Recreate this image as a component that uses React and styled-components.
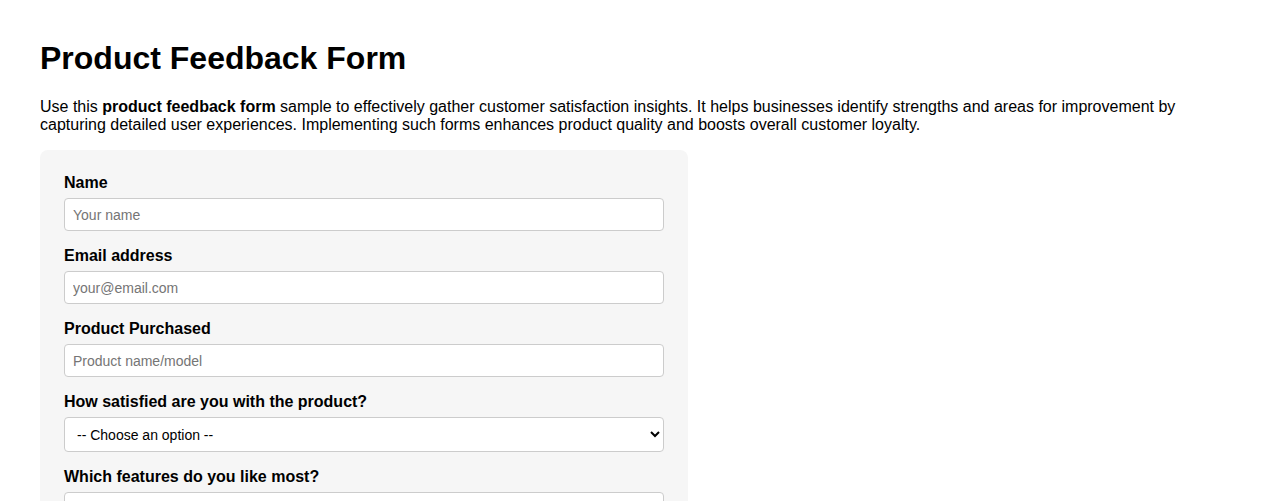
import React from 'react';
import styled, { createGlobalStyle } from 'styled-components';

const GlobalStyle = createGlobalStyle`
  body {
    margin: 0;
    background: #fff;
    font-family: "Liberation Sans", Arial, sans-serif;
    color: #000;
  }
`;

const Page = styled.div`
  padding: 40px;
`;

const Title = styled.h1`
  font-size: 32px;
  font-weight: bold;
  margin: 0 0 21px;
`;

const Intro = styled.p`
  font-size: 16px;
  margin: 0 0 16px;
`;

const Form = styled.form`
  width: 600px;
  padding: 24px;
  background: #f6f6f6;
  border-radius: 8px;
`;

const Field = styled.div`
  margin-bottom: 16px;
`;

const Label = styled.label`
  display: block;
  font-size: 16px;
  font-weight: bold;
  margin-bottom: 6px;
`;

const Input = styled.input`
  display: block;
  box-sizing: border-box;
  width: 100%;
  height: 33px;
  padding: 0 8px;
  font-size: 14px;
  font-family: "Liberation Sans", Arial, sans-serif;
  border: 1px solid #ccc;
  border-radius: 4px;
  background: #fff;

  &::placeholder {
    color: #757575;
  }
`;

const Select = styled.select`
  display: block;
  box-sizing: border-box;
  width: 100%;
  height: 35px;
  padding: 0 8px;
  font-size: 14px;
  font-family: "Liberation Sans", Arial, sans-serif;
  color: #000;
  border: 1px solid #ccc;
  border-radius: 4px;
  background: #fff;
`;

const fields = [
  { id: 'name', label: 'Name', placeholder: 'Your name', type: 'text' },
  { id: 'email', label: 'Email address', placeholder: 'your@email.com', type: 'email' },
  { id: 'product', label: 'Product Purchased', placeholder: 'Product name/model', type: 'text' },
];

export default function App() {
  return (
    <Page>
      <GlobalStyle />
      <Title>Product Feedback Form</Title>
      <Intro>
        Use this <b>product feedback form</b> sample to effectively gather customer satisfaction
        insights. It helps businesses identify strengths and areas for improvement by capturing
        detailed user experiences. Implementing such forms enhances product quality and boosts
        overall customer loyalty.
      </Intro>
      <Form onSubmit={(e) => e.preventDefault()}>
        {fields.map((f) => (
          <Field key={f.id}>
            <Label htmlFor={f.id}>{f.label}</Label>
            <Input id={f.id} type={f.type} placeholder={f.placeholder} />
          </Field>
        ))}
        <Field>
          <Label htmlFor='satisfaction'>How satisfied are you with the product?</Label>
          <Select id='satisfaction' defaultValue=''>
            <option value=''>-- Choose an option --</option>
            <option>Very satisfied</option>
            <option>Satisfied</option>
            <option>Neutral</option>
            <option>Dissatisfied</option>
            <option>Very dissatisfied</option>
          </Select>
        </Field>
        <Field>
          <Label htmlFor='features'>Which features do you like most?</Label>
          <Input id='features' type='text' />
        </Field>
      </Form>
    </Page>
  );
}
